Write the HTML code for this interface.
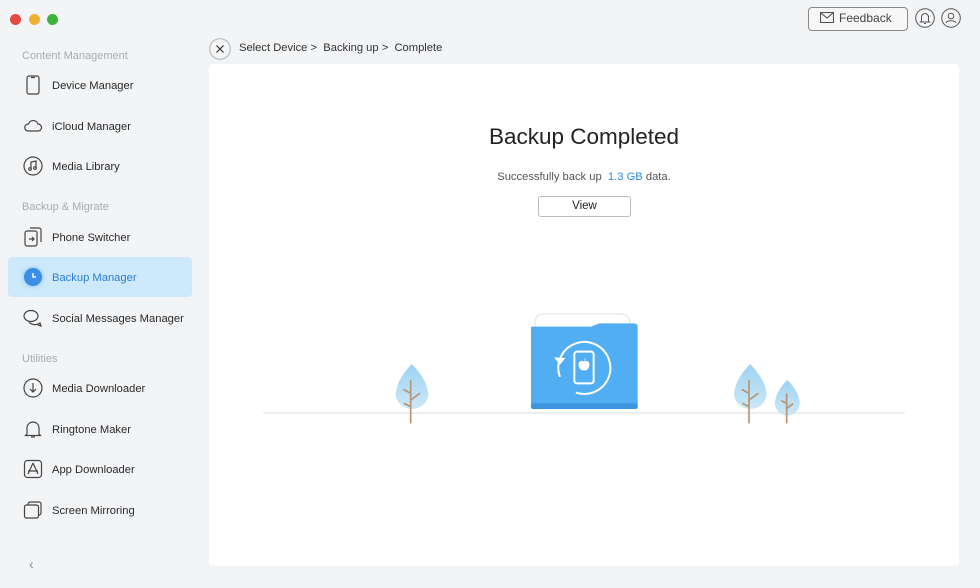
<!DOCTYPE html>
<html><head><style>
body{margin:0;width:980px;height:588px;background:#f3f4f6;font-family:"Liberation Sans",sans-serif;position:relative;overflow:hidden;color:#222}
.a{position:absolute}
.sec{position:absolute;left:22px;font-size:11px;color:#a8abb0;top:0}
.it{position:absolute;left:52px;font-size:11.2px;color:#2a2a2a;transform:translateY(-50%)}
.ic{position:absolute;left:23px;width:20px;height:20px;transform:translateY(-50%)}
</style></head><body>
<div class="a" style="left:10px;top:14px;width:11px;height:11px;border-radius:50%;background:#e5483f"></div>
<div class="a" style="left:29px;top:14px;width:11px;height:11px;border-radius:50%;background:#f0b132"></div>
<div class="a" style="left:47px;top:14px;width:11px;height:11px;border-radius:50%;background:#3db33c"></div>

<div class="sec" style="top:50px">Content Management</div>
<div class="sec" style="top:201px">Backup &amp; Migrate</div>
<div class="sec" style="top:353px">Utilities</div>

<svg class="ic" style="top:85px" viewBox="0 0 20 20" fill="none" stroke="#444" stroke-width="1.2"><rect x="4" y="1" width="12" height="18" rx="2"/><path d="M8 2.5h4"/></svg>
<div class="it" style="top:86px">Device Manager</div>
<svg class="ic" style="top:126px" viewBox="0 0 20 20" fill="none" stroke="#444" stroke-width="1.2"><path d="M5 15h10a3.5 3.5 0 0 0 0-7 5 5 0 0 0-9.5 0A3.5 3.5 0 0 0 5 15z"/></svg>
<div class="it" style="top:127px">iCloud Manager</div>
<svg class="ic" style="top:166px" viewBox="0 0 20 20" fill="none" stroke="#444" stroke-width="1.2"><circle cx="10" cy="10" r="9"/><path d="M8 13V6l5-1v7"/><circle cx="7" cy="13" r="1.3"/><circle cx="12" cy="12" r="1.3"/></svg>
<div class="it" style="top:167px">Media Library</div>
<svg class="ic" style="top:237px" viewBox="0 0 20 20" fill="none" stroke="#444" stroke-width="1.2"><rect x="2" y="4" width="12" height="15" rx="2"/><path d="M7 1h9a2 2 0 0 1 2 2v12"/><path d="M6 12h5m-2-2 2 2-2 2"/></svg>
<div class="it" style="top:238px">Phone Switcher</div>
<div class="a" style="left:8px;top:257px;width:184px;height:40px;background:#cde9fb;border-radius:4px"></div>
<div class="a" style="left:24px;top:268px;width:18px;height:18px;border-radius:50%;background:#3a8ee6;box-shadow:0 0 4px #7bb9f0"></div>
<svg class="a" style="left:24px;top:268px" width="18" height="18" viewBox="0 0 18 18" fill="none" stroke="#fff" stroke-width="1.4"><path d="M9 5v4h3"/></svg>
<div class="it" style="top:278px;color:#2a7fd4">Backup Manager</div>
<svg class="ic" style="top:318px" viewBox="0 0 20 20" fill="none" stroke="#444" stroke-width="1.2"><ellipse cx="8" cy="8" rx="7" ry="5.5"/><path d="M6 14a7 5.5 0 0 0 11 1l1 3-3-1"/></svg>
<div class="it" style="top:319px">Social Messages Manager</div>
<svg class="ic" style="top:388px" viewBox="0 0 20 20" fill="none" stroke="#444" stroke-width="1.2"><circle cx="10" cy="10" r="9"/><path d="M10 5v9m-3-3 3 3 3-3"/></svg>
<div class="it" style="top:389px">Media Downloader</div>
<svg class="ic" style="top:429px" viewBox="0 0 20 20" fill="none" stroke="#444" stroke-width="1.2"><path d="M4 15V9a6 6 0 0 1 12 0v6l1.5 1.5h-15z"/><path d="M8 18h4"/></svg>
<div class="it" style="top:430px">Ringtone Maker</div>
<svg class="ic" style="top:469px" viewBox="0 0 20 20" fill="none" stroke="#444" stroke-width="1.2"><rect x="1.5" y="1.5" width="17" height="17" rx="3"/><path d="M10 4 5 15m5-11 5 11M5 12h10"/></svg>
<div class="it" style="top:470px">App Downloader</div>
<svg class="ic" style="top:510px" viewBox="0 0 20 20" fill="none" stroke="#444" stroke-width="1.2"><rect x="1.5" y="5" width="14" height="13" rx="2"/><path d="M5 5V4a2 2 0 0 1 2-2h9a2 2 0 0 1 2 2v9a2 2 0 0 1-2 2h-1"/></svg>
<div class="it" style="top:511px">Screen Mirroring</div>
<div class="a" style="left:29px;top:556px;font-size:14px;color:#888">&lsaquo;</div>

<div class="a" style="left:808px;top:7px;width:98px;height:22px;border:1px solid #888;border-radius:4px;background:#f7f7f8"></div>
<svg class="a" style="left:820px;top:12px" width="14" height="11" viewBox="0 0 14 11" fill="none" stroke="#555" stroke-width="1.1"><rect x=".5" y=".5" width="13" height="10"/><path d="M1 1l6 5 6-5"/></svg>
<div class="a" style="left:839px;top:11px;font-size:12px;color:#444">Feedback</div>
<svg class="a" style="left:915px;top:8px" width="20" height="20" viewBox="0 0 20 20" fill="none" stroke="#555" stroke-width="1"><circle cx="10" cy="10" r="9.3"/><path d="M6.5 13V9a3.5 3.5 0 0 1 7 0v4l1 1h-9zM9 15.5h2"/></svg>
<svg class="a" style="left:941px;top:8px" width="20" height="20" viewBox="0 0 20 20" fill="none" stroke="#555" stroke-width="1"><circle cx="10" cy="10" r="9.3"/><circle cx="10" cy="8" r="2.8"/><path d="M5 15c1-3 9-3 10 0"/></svg>

<svg class="a" style="left:209px;top:38px" width="22" height="22" viewBox="0 0 22 22" fill="none" stroke="#333" stroke-width="1.2"><circle cx="11" cy="11" r="10.3" stroke="#bbb"/><path d="M7.5 7.5l7 7m0-7-7 7"/></svg>
<div class="a" style="left:239px;top:42px;font-size:11.2px;color:#333">Select Device &gt;&nbsp; Backing up &gt;&nbsp; Complete</div>

<div class="a" style="left:209px;top:64px;width:750px;height:502px;background:#fff;border-radius:4px"></div>
<div class="a" style="left:209px;width:750px;top:124px;text-align:center;font-size:22.5px;color:#222">Backup Completed</div>
<div class="a" style="left:209px;width:750px;top:171px;text-align:center;font-size:11.2px;color:#555">Successfully back up &nbsp;<span style="color:#2a8ae0">1.3 GB</span> data.</div>
<div class="a" style="left:538px;top:196px;width:91px;height:19px;border:1px solid #bbb;border-radius:3px;text-align:center;font-size:11.5px;line-height:19px;color:#222">View</div>

<div class="a" style="left:263px;top:412px;width:642px;height:2px;background:#eeeeee"></div>
<svg class="a" style="left:380px;top:300px" width="440" height="130" viewBox="0 0 1320 390">
<defs><linearGradient id="t" x1="0" y1="0" x2="0" y2="1"><stop offset="0" stop-color="#9fd2f3"/><stop offset="1" stop-color="#cbe8f8"/></linearGradient></defs>
<path d="M465 70q0-28 28-28h228q28 0 28 28v40H465z" fill="#fff" stroke="#e6e6e6" stroke-width="4"/>
<path d="M453 80h180l25-10h105q10 0 10 10v235q0 12-12 12H465q-12 0-12-12z" fill="#52aef2"/>
<rect x="453" y="310" width="320" height="17" rx="6" fill="#3d95e0"/>
<circle cx="613" cy="204" r="78" fill="none" stroke="#fff" stroke-width="6" stroke-dasharray="420 70" transform="rotate(160 613 204)"/>
<path d="M522 172l18 22 16-20z" fill="#fff"/>
<rect x="583" y="155" width="58" height="95" rx="8" fill="none" stroke="#fff" stroke-width="6"/>
<path d="M612 185c-8-6-18 0-16 12 2 10 10 18 16 13 6 5 14-3 16-13 2-12-8-18-16-12z M612 184q0-8 7-10" fill="#fff"/>
<path d="M95 192q50 50 50 95a50 50 0 0 1-98 0q0-45 48-95z" fill="url(#t)"/>
<path d="M1110 192q50 50 50 95a50 50 0 0 1-98 0q0-45 48-95z" fill="url(#t)"/>
<path d="M1222 240q37 37 37 70a37 37 0 0 1-74 0q0-33 37-70z" fill="url(#t)"/>
<g stroke="#b89470" stroke-width="5" fill="none"><path d="M92 370V240M92 280l-22-12M92 300l28-20M92 320l-20-10"/><path d="M1107 370V240M1107 280l-22-12M1107 300l28-20M1107 320l-20-10"/><path d="M1220 370V280M1220 310l-16-8M1220 325l20-14"/></g>
</svg>
</body></html>
